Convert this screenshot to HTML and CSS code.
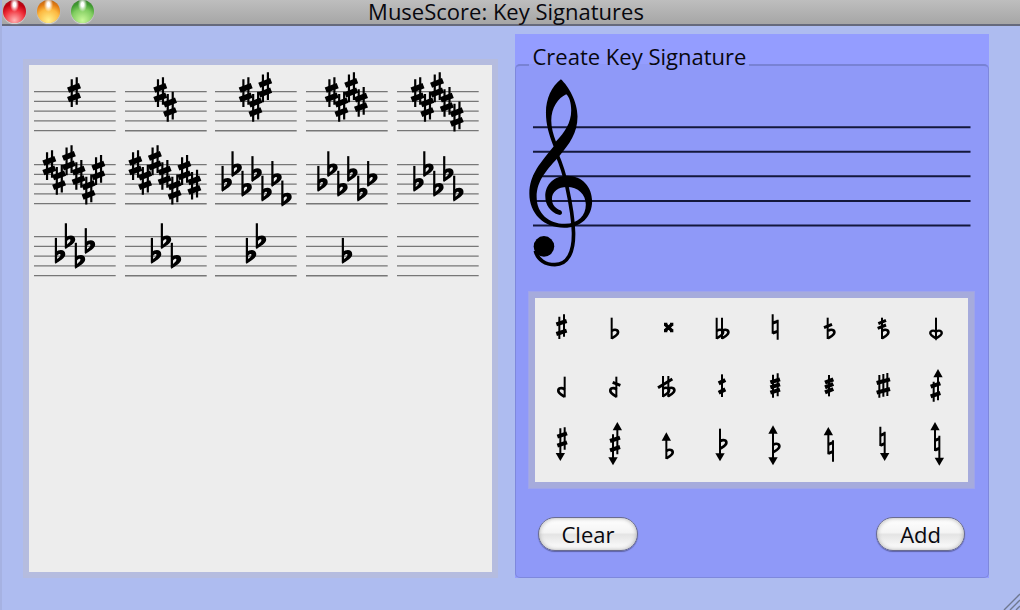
FILE: index.html
```html
<!DOCTYPE html>
<html lang="en">
<head>
<meta charset="utf-8">
<title>MuseScore: Key Signatures</title>
<link rel="stylesheet" href="styles.css">
</head>
<body>
<svg class="defs" aria-hidden="true">
  <defs>
    <g id="sharp">
      <path d="M-2.3-12.8V15M2.7-15V12.8" stroke="#000" stroke-width="2.2"/>
      <path d="M-6-2L6-6.6M-6 7.6L6 3" stroke="#000" stroke-width="5.6"/>
    </g>
    <g id="flat">
      <path d="M0 0V25" stroke="#000" stroke-width="2.2"/>
      <path fill-rule="evenodd" d="M-.6 14.6C3 11 9.4 11.2 9.4 16.4C9.4 20.6 3.6 22.8-.6 26.2ZM1.2 17.8V21.2C3 19.6 4.6 18.4 4.6 16.8C4.6 15.6 2.4 16 1.2 17.8Z"/>
    </g>
    <g id="s1"><use href="#sharp"/></g>
    <g id="s2"><use href="#s1"/><use href="#sharp" x="9.8" y="14.7"/></g>
    <g id="s3"><use href="#s2"/><use href="#sharp" x="19.6" y="-4.9"/></g>
    <g id="s4"><use href="#s3"/><use href="#sharp" x="29.4" y="9.8"/></g>
    <g id="s5"><use href="#s4"/><use href="#sharp" x="39.4" y="24.5"/></g>
    <g id="s6"><use href="#s5"/><use href="#sharp" x="49.2" y="4.9"/></g>
    <g id="s7"><use href="#s6"/><use href="#sharp" x="59.2" y="19.6"/></g>
    <g id="f1"><use href="#flat"/></g>
    <g id="f2"><use href="#f1"/><use href="#flat" x="10" y="-14.7"/></g>
    <g id="f3"><use href="#f2"/><use href="#flat" x="20" y="4.9"/></g>
    <g id="f4"><use href="#f3"/><use href="#flat" x="30" y="-9.8"/></g>
    <g id="f5"><use href="#f4"/><use href="#flat" x="40" y="9.8"/></g>
    <g id="f6"><use href="#f5"/><use href="#flat" x="50" y="-4.9"/></g>
    <g id="f7"><use href="#f6"/><use href="#flat" x="60" y="14.7"/></g>
    <path id="staff" d="M0 21.7H82M0 31.5H82M0 41.3H82M0 51.1H82M0 60.9H82" stroke="#777" stroke-width="1.4"/>
    <path id="bowl" fill="none" stroke="#000" stroke-width="8" d="M0 39C10 32 20 36 19 44C18 52 8 56 0 61"/>
    <path id="up" d="M0 0L14 25H-14Z"/>
    <path id="down" d="M0 0L14-24H-14Z"/>
  </defs>
</svg>

<header class="titlebar">
  <div class="lights">
    <button class="light red" aria-label="Close"></button>
    <button class="light amber" aria-label="Minimize"></button>
    <button class="light green" aria-label="Zoom"></button>
  </div>
  <h1 class="title">MuseScore: Key Signatures</h1>
</header>

<main class="content">
  <section class="keys" aria-label="Key signatures">
    <button class="key" aria-label="G major"><svg viewBox="0 0 82 73"><use href="#staff"/><use href="#s1" x="40.2" y="22.2"/></svg></button>
    <button class="key" aria-label="D major"><svg viewBox="0 0 82 73"><use href="#staff"/><use href="#s2" x="35.4" y="22.2"/></svg></button>
    <button class="key" aria-label="A major"><svg viewBox="0 0 82 73"><use href="#staff"/><use href="#s3" x="30.8" y="22.2"/></svg></button>
    <button class="key" aria-label="E major"><svg viewBox="0 0 82 73"><use href="#staff"/><use href="#s4" x="25.8" y="22.2"/></svg></button>
    <button class="key" aria-label="B major"><svg viewBox="0 0 82 73"><use href="#staff"/><use href="#s5" x="20.6" y="22.2"/></svg></button>
    <button class="key" aria-label="F sharp major"><svg viewBox="0 0 82 73"><use href="#staff"/><use href="#s6" x="15.4" y="22.2"/></svg></button>
    <button class="key" aria-label="C sharp major"><svg viewBox="0 0 82 73"><use href="#staff"/><use href="#s7" x="10.4" y="22.2"/></svg></button>
    <button class="key" aria-label="C flat major"><svg viewBox="0 0 82 73"><use href="#staff"/><use href="#f7" x="7.6" y="23"/></svg></button>
    <button class="key" aria-label="G flat major"><svg viewBox="0 0 82 73"><use href="#staff"/><use href="#f6" x="12.4" y="23"/></svg></button>
    <button class="key" aria-label="D flat major"><svg viewBox="0 0 82 73"><use href="#staff"/><use href="#f5" x="17.4" y="23"/></svg></button>
    <button class="key" aria-label="A flat major"><svg viewBox="0 0 82 73"><use href="#staff"/><use href="#f4" x="22" y="23"/></svg></button>
    <button class="key" aria-label="E flat major"><svg viewBox="0 0 82 73"><use href="#staff"/><use href="#f3" x="27" y="23"/></svg></button>
    <button class="key" aria-label="B flat major"><svg viewBox="0 0 82 73"><use href="#staff"/><use href="#f2" x="32" y="23"/></svg></button>
    <button class="key" aria-label="F major"><svg viewBox="0 0 82 73"><use href="#staff"/><use href="#f1" x="37" y="23"/></svg></button>
    <button class="key" aria-label="C major"><svg viewBox="0 0 82 73"><use href="#staff"/></svg></button>
  </section>

  <section class="creator">
    <fieldset class="group">
      <legend class="group-title">Create Key Signature</legend>
      <svg class="score" viewBox="54 138 1341 582" role="img" aria-label="Staff with treble clef">
        <path d="M66 292H1383M66 366H1383M66 440H1383M66 514H1383M66 588H1383" stroke="#14183c" stroke-width="6"/>
        <path fill-rule="evenodd" d="M150 148C172 168 200 215 200 260C200 310 176 342 146 378C110 418 77 452 77 502C77 552 114 583 162 583C202 583 225 558 225 525C225 494 202 472 168 472C142 472 123 486 123 508C123 526 134 536 150 543C157 550 152 558 144 556C118 548 103 526 103 500C103 464 130 438 170 438C214 438 244 472 244 515C244 562 210 595 160 595C98 595 55 552 55 492C55 432 92 396 128 350C114 314 105 284 105 248C105 206 122 170 150 148ZM166 193C142 204 121 234 121 272C121 294 127 314 135 335C162 308 181 278 181 242C181 218 175 200 166 193Z"/>
        <path d="M137 372C150 402 160 430 168 470C180 525 187 565 188 610C189 670 170 706 132 706C104 706 80 692 73 664" fill="none" stroke="#000" stroke-width="11"/>
        <circle cx="99" cy="651" r="31"/>
      </svg>

      <div class="accidentals">
        <button class="acc" aria-label="Sharp"><svg viewBox="0 0 161 174"><path class="st" d="M73 53V120M87 46V113"/><path class="bar" d="M64 76L95 66M64 105L95 95"/></svg></button>
        <button class="acc" aria-label="Flat"><svg viewBox="0 0 161 174"><path class="st" d="M71 56V120"/><use href="#bowl" x="71" y="57"/></svg></button>
        <button class="acc" aria-label="Double sharp"><svg viewBox="0 0 161 174"><path d="M69 76L90 95M90 76L69 95" stroke="#000" stroke-width="10"/><path d="M66 71h10v9h-10zM84 71h10v9h-10zM66 91h10v9h-10zM84 91h10v9h-10z"/></svg></button>
        <button class="acc" aria-label="Double flat"><svg viewBox="0 0 161 174"><path class="st" d="M62 56V120M78 56V120"/><use href="#bowl" x="62" y="57"/><use href="#bowl" x="78" y="57"/></svg></button>
        <button class="acc" aria-label="Natural"><svg viewBox="0 0 161 174"><path class="st" d="M71 46V104M86 62V122"/><path class="thin" d="M71 72L86 67M71 102L86 97"/></svg></button>
        <button class="acc" aria-label="Flat slash"><svg viewBox="0 0 161 174"><path class="st" d="M74 56V120"/><path class="thin" d="M63 86L87 76"/><use href="#bowl" x="75" y="57"/></svg></button>
        <button class="acc" aria-label="Flat double slash"><svg viewBox="0 0 161 174"><path class="st" d="M75 56V120"/><path class="thin" d="M64 74L87 64M62 88L87 78"/><use href="#bowl" x="75" y="57"/></svg></button>
        <button class="acc" aria-label="Mirrored double flat"><svg viewBox="0 0 161 174"><path class="st" d="M78 56V120"/><path d="M78 98C68 92 60 96 61 104C64 113 74 113 78 119C82 113 92 113 95 104C96 96 88 92 78 98Z" fill="none" stroke="#000" stroke-width="7"/></svg></button>

        <button class="acc" aria-label="Mirrored flat"><svg viewBox="0 0 161 174"><path class="st" d="M89 59V121"/><use href="#bowl" transform="translate(89 58) scale(-1 1)"/></svg></button>
        <button class="acc" aria-label="Mirrored flat slash"><svg viewBox="0 0 161 174"><path class="st" d="M85 59V121"/><path class="thin" d="M74 76L97 85"/><use href="#bowl" transform="translate(86 58) scale(-1 1)"/></svg></button>
        <button class="acc" aria-label="Double flat slash"><svg viewBox="0 0 161 174"><path class="st" d="M63 57V120M79 57V120"/><path class="thin" d="M48 92L91 66"/><use href="#bowl" x="62" y="57"/><use href="#bowl" x="78" y="57"/></svg></button>
        <button class="acc" aria-label="Half sharp"><svg viewBox="0 0 161 174"><path class="st" d="M78 52V120"/><path class="bar" d="M68 79L88 69M68 107L88 97"/></svg></button>
        <button class="acc" aria-label="Sharp three bars"><svg viewBox="0 0 161 174"><path class="st" d="M72 53V122M86 49V118"/><path class="bar" d="M64 76L93 67M64 91L93 82M64 107L93 98"/></svg></button>
        <button class="acc" aria-label="Half sharp three bars"><svg viewBox="0 0 161 174"><path class="st" d="M78 54V118"/><path class="bar" d="M66 77L91 67M66 91L91 81M66 106L91 96"/></svg></button>
        <button class="acc" aria-label="Sharp and a half"><svg viewBox="0 0 161 174"><path class="st" d="M67 54V122M79 51V119M91 48V117"/><path class="bar" d="M59 78L99 67M59 107L99 96"/></svg></button>
        <button class="acc" aria-label="Sharp arrow up"><svg viewBox="0 0 161 174"><path class="st" d="M71 74V134M84 50V130"/><path class="bar" d="M62 89L91 79M62 118L91 108"/><use href="#up" x="84" y="36"/></svg></button>

        <button class="acc" aria-label="Sharp arrow down"><svg viewBox="0 0 161 174"><path class="st" d="M76 40V120M89 37V104"/><path class="bar" d="M67 65L96 55M67 92L96 82"/><use href="#down" x="76" y="138"/></svg></button>
        <button class="acc" aria-label="Sharp arrow both"><svg viewBox="0 0 161 174"><path class="st" d="M75 58V130M88 44V118"/><path class="bar" d="M66 78L96 68M66 106L96 96"/><use href="#up" x="88" y="21"/><use href="#down" x="75" y="151"/></svg></button>
        <button class="acc" aria-label="Flat arrow up"><svg viewBox="0 0 161 174"><path class="st" d="M73 70V132"/><use href="#bowl" x="73" y="69"/><use href="#up" x="73" y="52"/></svg></button>
        <button class="acc" aria-label="Flat arrow down"><svg viewBox="0 0 161 174"><path class="st" d="M72 41V120"/><use href="#bowl" x="72" y="40"/><use href="#down" x="72" y="139"/></svg></button>
        <button class="acc" aria-label="Flat arrow both"><svg viewBox="0 0 161 174"><path class="st" d="M72 50V130"/><use href="#bowl" x="72" y="51"/><use href="#up" x="72" y="31"/><use href="#down" x="72" y="151"/></svg></button>
        <button class="acc" aria-label="Natural arrow up"><svg viewBox="0 0 161 174"><path class="st" d="M76 55V118M90 76V140"/><path class="thin" d="M76 88L90 83M76 115L90 110"/><use href="#up" x="76" y="36"/></svg></button>
        <button class="acc" aria-label="Natural arrow down"><svg viewBox="0 0 161 174"><path class="st" d="M70 35V93M83 50V118"/><path class="thin" d="M70 61L83 56M70 91L83 86"/><use href="#down" x="83" y="138"/></svg></button>
        <button class="acc" aria-label="Natural arrow both"><svg viewBox="0 0 161 174"><path class="st" d="M75 40V108M88 62V130"/><path class="thin" d="M75 76L88 71M75 105L88 100"/><use href="#up" x="75" y="21"/><use href="#down" x="88" y="152"/></svg></button>
      </div>

      <div class="actions">
        <button class="pill">Clear</button>
        <button class="pill">Add</button>
      </div>
    </fieldset>
  </section>
</main>
<svg class="grip" viewBox="0 0 18 18" aria-hidden="true"><path d="M2 18L18 2M8 18L18 8M14 18L18 14" stroke="#6f7890" stroke-width="1.4"/></svg>
</body>
</html>
```

FILE: styles.css
```css
* { box-sizing: border-box; }

body {
  margin: 0;
  min-height: 100vh;
  display: flex;
  flex-direction: column;
  position: relative;
  background: #aebcf0;
  border-left: 2px solid #a6b2e2;
  font-family: "Open Sans", "Noto Sans", sans-serif;
  font-size: 22px;
  color: #08080e;
}

button {
  margin: 0;
  padding: 0;
  border: 0;
  background: none;
  font: inherit;
  color: inherit;
}

svg { display: block; }
.defs { position: absolute; width: 0; height: 0; }

.titlebar {
  height: 26px;
  margin-left: -2px;
  display: grid;
  grid-template-columns: 1fr auto 1fr;
  align-items: end;
  background: linear-gradient(#bebebe, #a6a6a6);
  border-bottom: 2px solid #666a7c;
}
.lights {
  display: flex;
  gap: 11px;
  padding: 0 0 4px 3px;
}
.light {
  width: 23px;
  height: 23px;
  border-radius: 50%;
  box-shadow: 0 1px 1px #d8d8d8;
}
.red { background: radial-gradient(ellipse at 50% 20%, #fff 0 8%, transparent 28%), radial-gradient(circle at 50% 88%, #ffb4b4 0, #f0303a 45%, #c00010 70%, #8c2028 100%); }
.amber { background: radial-gradient(ellipse at 50% 20%, #fff 0 8%, transparent 28%), radial-gradient(circle at 50% 88%, #fff08a 0, #fcb840 48%, #e07810 72%, #98602c 100%); }
.green { background: radial-gradient(ellipse at 50% 20%, #fff 0 8%, transparent 28%), radial-gradient(circle at 50% 88%, #c8f898 0, #80cc60 48%, #3f9a30 72%, #456f3c 100%); }

.title {
  margin: 0;
  padding: 0 8px 5px 0;
  font-size: 22px;
  font-weight: 400;
  line-height: 22px;
}

.content {
  flex: 1;
  display: grid;
  grid-template-columns: 1fr 1fr;
  gap: 17px;
  padding: 8px 31px 32px 21px;
}

.keys {
  margin-top: 25px;
  display: grid;
  grid-template-columns: repeat(5, 1fr);
  align-content: start;
  column-gap: 9px;
  padding: 5px 13px 5px 5px;
  background: #ededed;
  border: 6px solid #b5bcdf;
}
.key svg { width: 100%; overflow: visible; }

.creator {
  display: flex;
  flex-direction: column;
  background: #949dff;
}
.group {
  flex: 1;
  margin: 10px 0 0;
  min-width: 0;
  padding: 0 14px 25px 13px;
  border: 1px solid #7e88dc;
  border-top: 2px solid #7882d4;
  border-radius: 5px;
  background: #8f99f8;
}
.group-title {
  padding: 0 3px 18px 4px;
  line-height: 24px;
}
.score {
  width: 100%;
  margin-top: -10px;
}
.accidentals {
  margin-top: 23px;
  display: grid;
  grid-template-columns: repeat(8, 1fr);
  padding: 1px 4px 9px 0;
  background: #ededed;
  border: 6px solid #a6abdc;
  outline: 1px solid #9fa4ea;
}
.acc svg { width: 100%; }
.st { fill: none; stroke: #000; stroke-width: 6; }
.thin { fill: none; stroke: #000; stroke-width: 9; }
.bar { fill: none; stroke: #000; stroke-width: 12; }

.actions {
  display: flex;
  justify-content: space-between;
  margin-top: 29px;
  padding: 0 9px;
}
.pill {
  height: 34px;
  padding: 0 23px;
  line-height: 30px;
  border: 1px solid #6a6c90;
  border-radius: 17px;
  background: linear-gradient(#fff, #f4f4f4 45%, #e4e4e4 52%, #fff);
  box-shadow: 0 1px 1px #5c62a8, inset 0 0 4px #a8a8a8;
}

.grip {
  position: absolute;
  right: 0;
  bottom: 0;
  width: 18px;
  height: 18px;
}
```
